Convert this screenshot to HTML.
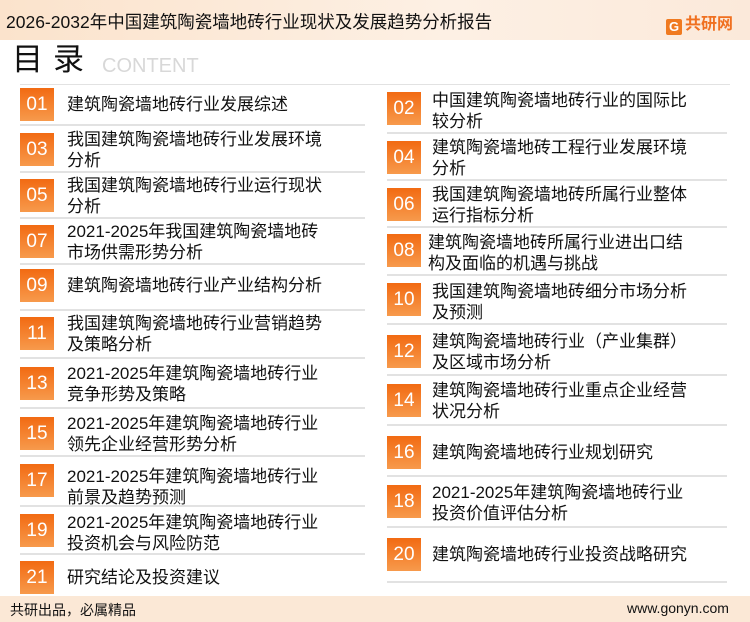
<!DOCTYPE html>
<html><head><meta charset="utf-8"><style>
*{margin:0;padding:0;box-sizing:border-box}
body{width:750px;height:622px;position:relative;overflow:hidden;background:#fff;font-family:"Liberation Sans","Noto Sans CJK SC",sans-serif;color:#111}
.hd{position:absolute;left:0;top:0;width:750px;height:40px;background:linear-gradient(90deg,#fbe3cc,#fdf0e4 60%,#fbe9da);}
.hd .t{position:absolute;left:6px;top:9px;font-size:17.5px;color:#111;white-space:nowrap}
.logo{position:absolute;left:666px;top:10px;font-size:16px;font-weight:bold;color:#f07020;white-space:nowrap}
.logo b{display:inline-block;width:16px;height:16px;background:#f07a20;color:#fff;font-size:13px;text-align:center;line-height:16px;border-radius:2px;margin-right:3px;vertical-align:-2px}
.ml{position:absolute;left:12px;top:42px;font-size:31px;line-height:36px;letter-spacing:10px;color:#111}
.ct{position:absolute;left:102px;top:55px;font-size:20px;color:#d8d8d8}
.ft{position:absolute;left:0;top:596px;width:750px;height:26px;background:#fbe8d6;font-size:14px}
.ft span{position:absolute;top:4px}
.n{position:absolute;width:34px;height:33px;background:linear-gradient(180deg,#f26a12,#f79a4c);color:#fff;font-size:19px;text-align:center;line-height:33px}
.tx{position:absolute;font-size:17px;line-height:21px;white-space:nowrap}
.ln{position:absolute;height:2px;background:#e2e2e2}
</style></head><body>
<div class="hd"><div class="t">2026-2032年中国建筑陶瓷墙地砖行业现状及发展趋势分析报告</div><div class="logo"><b>G</b>共研网</div></div>
<div class="ml">目录</div><div class="ct">CONTENT</div>
<div class="ln" style="left:20px;top:84px;width:710px;height:1px"></div>

<div class="n" style="left:20px;top:88px">01</div><div class="tx" style="left:67px;top:94px">建筑陶瓷墙地砖行业发展综述</div><div class="ln" style="left:20px;top:124px;width:345px"></div>
<div class="n" style="left:20px;top:133px">03</div><div class="tx" style="left:67px;top:129px">我国建筑陶瓷墙地砖行业发展环境<br>分析</div><div class="ln" style="left:20px;top:171px;width:345px"></div>
<div class="n" style="left:20px;top:179px">05</div><div class="tx" style="left:67px;top:175px">我国建筑陶瓷墙地砖行业运行现状<br>分析</div><div class="ln" style="left:20px;top:217px;width:345px"></div>
<div class="n" style="left:20px;top:225px">07</div><div class="tx" style="left:67px;top:221px">2021-2025年我国建筑陶瓷墙地砖<br>市场供需形势分析</div><div class="ln" style="left:20px;top:263px;width:345px"></div>
<div class="n" style="left:20px;top:269px">09</div><div class="tx" style="left:67px;top:275px">建筑陶瓷墙地砖行业产业结构分析</div><div class="ln" style="left:20px;top:309px;width:345px"></div>
<div class="n" style="left:20px;top:317px">11</div><div class="tx" style="left:67px;top:313px">我国建筑陶瓷墙地砖行业营销趋势<br>及策略分析</div><div class="ln" style="left:20px;top:357px;width:345px"></div>
<div class="n" style="left:20px;top:367px">13</div><div class="tx" style="left:67px;top:363px">2021-2025年建筑陶瓷墙地砖行业<br>竞争形势及策略</div><div class="ln" style="left:20px;top:407px;width:345px"></div>
<div class="n" style="left:20px;top:417px">15</div><div class="tx" style="left:67px;top:413px">2021-2025年建筑陶瓷墙地砖行业<br>领先企业经营形势分析</div><div class="ln" style="left:20px;top:455px;width:345px"></div>
<div class="n" style="left:20px;top:464px">17</div><div class="tx" style="left:67px;top:466px">2021-2025年建筑陶瓷墙地砖行业<br>前景及趋势预测</div><div class="ln" style="left:20px;top:505px;width:345px"></div>
<div class="n" style="left:20px;top:514px">19</div><div class="tx" style="left:67px;top:512px">2021-2025年建筑陶瓷墙地砖行业<br>投资机会与风险防范</div><div class="ln" style="left:20px;top:553px;width:345px"></div>
<div class="n" style="left:20px;top:561px">21</div><div class="tx" style="left:67px;top:567px">研究结论及投资建议</div>

<div class="n" style="left:387px;top:92px">02</div><div class="tx" style="left:432px;top:90px">中国建筑陶瓷墙地砖行业的国际比<br>较分析</div><div class="ln" style="left:387px;top:132px;width:340px"></div>
<div class="n" style="left:387px;top:141px">04</div><div class="tx" style="left:432px;top:137px">建筑陶瓷墙地砖工程行业发展环境<br>分析</div><div class="ln" style="left:387px;top:179px;width:340px"></div>
<div class="n" style="left:387px;top:188px">06</div><div class="tx" style="left:432px;top:184px">我国建筑陶瓷墙地砖所属行业整体<br>运行指标分析</div><div class="ln" style="left:387px;top:226px;width:340px"></div>
<div class="n" style="left:387px;top:234px">08</div><div class="tx" style="left:428px;top:232px">建筑陶瓷墙地砖所属行业进出口结<br>构及面临的机遇与挑战</div><div class="ln" style="left:387px;top:274px;width:340px"></div>
<div class="n" style="left:387px;top:283px">10</div><div class="tx" style="left:432px;top:281px">我国建筑陶瓷墙地砖细分市场分析<br>及预测</div><div class="ln" style="left:387px;top:323px;width:340px"></div>
<div class="n" style="left:387px;top:335px">12</div><div class="tx" style="left:432px;top:331px">建筑陶瓷墙地砖行业（产业集群）<br>及区域市场分析</div><div class="ln" style="left:387px;top:374px;width:340px"></div>
<div class="n" style="left:387px;top:384px">14</div><div class="tx" style="left:432px;top:380px">建筑陶瓷墙地砖行业重点企业经营<br>状况分析</div><div class="ln" style="left:387px;top:424px;width:340px"></div>
<div class="n" style="left:387px;top:436px">16</div><div class="tx" style="left:432px;top:442px">建筑陶瓷墙地砖行业规划研究</div><div class="ln" style="left:387px;top:475px;width:340px"></div>
<div class="n" style="left:387px;top:485px">18</div><div class="tx" style="left:432px;top:482px">2021-2025年建筑陶瓷墙地砖行业<br>投资价值评估分析</div><div class="ln" style="left:387px;top:526px;width:340px"></div>
<div class="n" style="left:387px;top:538px">20</div><div class="tx" style="left:432px;top:544px">建筑陶瓷墙地砖行业投资战略研究</div><div class="ln" style="left:387px;top:581px;width:340px"></div>

<div class="ft"><span style="left:10px">共研出品，必属精品</span><span style="left:627px">www.gonyn.com</span></div>
</body></html>
